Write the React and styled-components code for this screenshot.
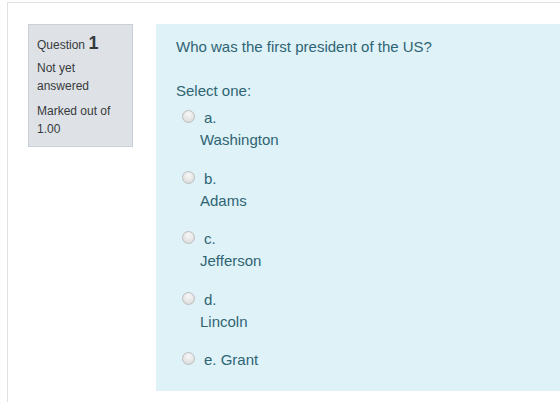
import React from 'react';
import styled, { createGlobalStyle } from 'styled-components';

const GlobalStyle = createGlobalStyle`
  body {
    margin: 0;
    background: #fff;
    font-family: "Liberation Sans", Arial, sans-serif;
  }
`;

const Page = styled.div`
  margin: 2px 0 0 7px;
  border-top: 1px solid #dee2e6;
  border-left: 1px solid #dee2e6;
  padding: 21px 0 12px 20px;
  height: 400px;
  box-sizing: border-box;
  overflow: hidden;
`;

const Question = styled.div`
  display: flex;
  align-items: flex-start;
  gap: 23px;
`;

const Info = styled.div`
  flex: 0 0 auto;
  width: 105px;
  box-sizing: border-box;
  background: #dee2e6;
  border: 1px solid #cad0d7;
  padding: 7px 8px 8px;
  color: #373a3c;
  font-size: 12px;
  line-height: 18px;
`;

const Title = styled.h3`
  margin: 0 0 3px;
  font-size: 12px;
  font-weight: normal;
  line-height: 22px;
`;

const Num = styled.span`
  font-size: 18px;
  font-weight: bold;
`;

const InfoLine = styled.div`
  margin-bottom: 7px;
  &:last-child { margin-bottom: 0; }
`;

const Formulation = styled.div`
  flex: 1 1 auto;
  background: #def2f8;
  color: #2f6473;
  padding: 12px 20px 8.5px;
  font-size: 15px;
  line-height: 22px;
`;

const QText = styled.div`
  margin-bottom: 22px;
`;

const Prompt = styled.div`
  margin-bottom: 5px;
`;

const Option = styled.div`
  display: flex;
  align-items: flex-start;
  padding: 0 0 16.5px 6px;
  &:last-child { padding-bottom: 11.5px; }
`;

const Radio = styled.input.attrs({ type: 'radio' })`
  appearance: none;
  -webkit-appearance: none;
  width: 13px;
  height: 13px;
  margin: 3px 5px 0 0;
  border-radius: 50%;
  border: 1px solid #bdbdbd;
  background: radial-gradient(circle at 50% 30%, #f7f7f7 0%, #e2e2e2 65%, #d6d6d6 100%);
  box-sizing: border-box;
  flex: 0 0 auto;
`;

const Label = styled.label`
  width: ${(p) => (p.$inline ? 'auto' : '80px')};
`;

const Letter = styled.span`
  padding-left: 4px;
`;

const answers = [
  { n: 'a.', t: 'Washington' },
  { n: 'b.', t: 'Adams' },
  { n: 'c.', t: 'Jefferson' },
  { n: 'd.', t: 'Lincoln' },
];

export default function App() {
  return (
    <>
      <GlobalStyle />
      <Page>
        <Question>
          <Info>
            <Title>
              Question <Num>1</Num>
            </Title>
            <InfoLine>Not yet<br />answered</InfoLine>
            <InfoLine>Marked out of<br />1.00</InfoLine>
          </Info>
          <Formulation>
            <QText>Who was the first president of the US?</QText>
            <Prompt>Select one:</Prompt>
            {answers.map((a) => (
              <Option key={a.n}>
                <Radio name="q1" />
                <Label>
                  <Letter>{a.n}</Letter>
                  <div>{a.t}</div>
                </Label>
              </Option>
            ))}
            <Option>
              <Radio name="q1" />
              <Label $inline>
                <Letter>e. Grant</Letter>
              </Label>
            </Option>
          </Formulation>
        </Question>
      </Page>
    </>
  );
}
